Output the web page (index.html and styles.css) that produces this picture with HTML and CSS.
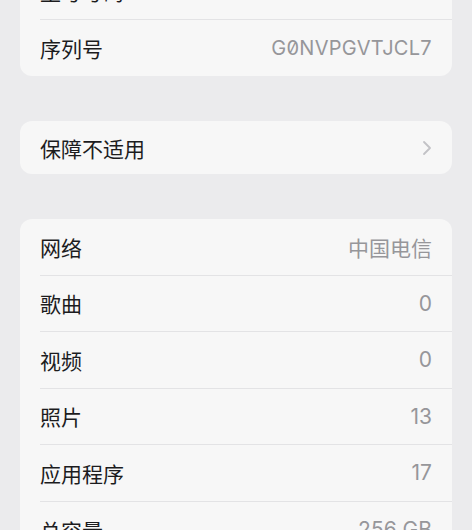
FILE: index.html
```html
<!DOCTYPE html>
<html lang="zh">
<head>
<meta charset="utf-8">
<link rel="stylesheet" href="styles.css">
</head>
<body>
<div class="page">
  <div class="card">
    <div class="row"><span class="label">型号号码</span><span class="value mono">MQ4L2CH/A</span></div>
    <div class="row"><span class="label">序列号</span><span class="value mono">G0NVPGVTJCL7</span></div>
  </div>
  <div class="card single">
    <div class="row"><span class="label">保障不适用</span>
      <svg class="chev" width="10" height="16" viewBox="0 0 10 16"><path d="M2 2 L8 8 L2 14" fill="none" stroke="#c2c2c6" stroke-width="1.8" stroke-linecap="round" stroke-linejoin="round"/></svg>
    </div>
  </div>
  <div class="card">
    <div class="row"><span class="label">网络</span><span class="value">中国电信</span></div>
    <div class="row"><span class="label">歌曲</span><span class="value">0</span></div>
    <div class="row"><span class="label">视频</span><span class="value">0</span></div>
    <div class="row"><span class="label">照片</span><span class="value">13</span></div>
    <div class="row"><span class="label">应用程序</span><span class="value">17</span></div>
    <div class="row"><span class="label">总容量</span><span class="value">256 GB</span></div>
  </div>
</div>
</body>
</html>
```
FILE: styles.css
```css
html, body {
  margin: 0;
  padding: 0;
  background: #ebebed;
  height: 530px;
  overflow: hidden;
}
body {
  font-family: "Inter", "Noto Sans CJK SC", sans-serif;
  color: #1c1c1e;
}
.page {
  margin-top: -37px;
  padding: 0 20px;
  display: flex;
  flex-direction: column;
  gap: 45px;
}
.card {
  background: #f7f7f7;
  border-radius: 12px;
  overflow: hidden;
}
.row {
  height: 56.5px;
  margin-left: 20px;
  padding-right: 20px;
  display: flex;
  align-items: center;
  justify-content: space-between;
  border-bottom: 1px solid #e3e3e5;
  box-sizing: border-box;
}
.row:last-child {
  border-bottom: none;
}
.single .row {
  height: 53px;
}
.label {
  font-size: 21px;
}
.value {
  font-size: 21px;
  color: #96969a;
}
.mono {
  font-size: 20px;
  font-feature-settings: "zero" 1;
  letter-spacing: 0.3px;
}
.chev {
  display: block;
}
```
